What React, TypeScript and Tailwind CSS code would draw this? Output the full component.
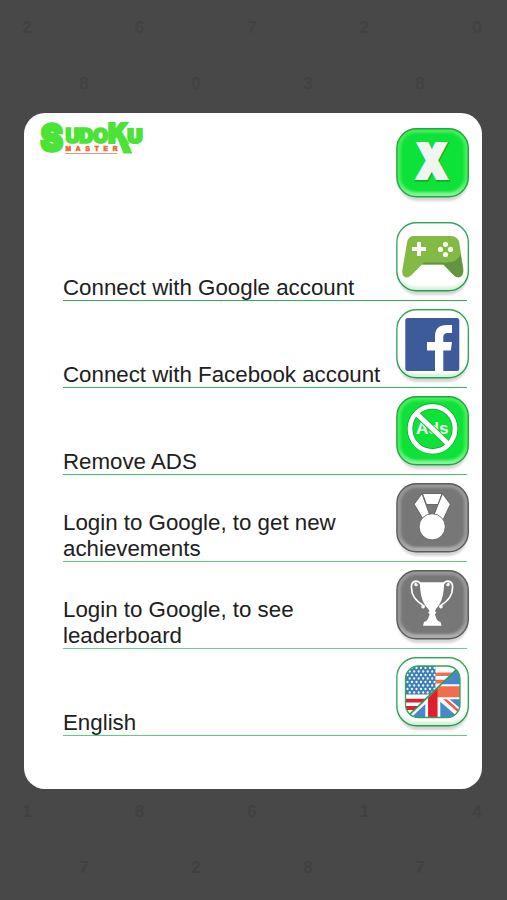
import type { ReactNode } from "react";

type Tone = "green" | "white" | "gray";

const tones = {
  green: { edge: "#23a545", rim: "#43ee58", face: "#08e237", glow: "#8bf59a" },
  white: { edge: "#23a24b", rim: "#ffffff", face: "#ffffff", glow: "#ffffff" },
  gray: { edge: "#5c5c5c", rim: "#969696", face: "#777777", glow: "#b0b0b0" },
};

function Tile({ tone, label, children }: { tone: Tone; label: string; children: ReactNode }) {
  const t = tones[tone];
  return (
    <button aria-label={label} className="block h-[76px] w-[74px] shrink-0">
      <svg viewBox="0 0 74 76" className="block h-[76px] w-[74px]">
        <defs>
          <linearGradient id={"face-" + label} x1="0" y1="0" x2="0" y2="1">
            <stop offset="0" stopColor={t.rim} />
            <stop offset="0.75" stopColor={t.rim} />
            <stop offset="1" stopColor={tone === "white" ? "#d3eed9" : t.glow} />
          </linearGradient>
          <filter id={"soft-" + label} x="-10%" y="-10%" width="120%" height="120%">
            <feGaussianBlur stdDeviation="1.3" />
          </filter>
        </defs>
        <rect x="2" y="5" width="70" height="68" rx="20" fill="#000" opacity="0.16" filter={"url(#soft-" + label + ")"} />
        <rect x="0.9" y="0.8" width="71.4" height="68" rx="19.5" fill={"url(#face-" + label + ")"} stroke={t.edge} strokeWidth="1.4" />
        {tone === "white" ? (
          <rect x="2.6" y="2.5" width="68" height="62" rx="18" fill="#fff" filter={"url(#soft-" + label + ")"} />
        ) : (
          <rect x="5" y="5" width="63" height="59" rx="15" fill={t.face} filter={"url(#soft-" + label + ")"} />
        )}
        {children}
      </svg>
    </button>
  );
}

function CloseGlyph() {
  return (
    <g fontFamily="Inter" fontWeight="900" fontSize="47">
      <text x="21.4" y="51.4" textLength="30" lengthAdjust="spacingAndGlyphs" fill="#14a832" stroke="#14a832" strokeWidth="5">X</text>
      <text x="20.7" y="50" textLength="30" lengthAdjust="spacingAndGlyphs" fill="#f1f5f1" stroke="#f1f5f1" strokeWidth="4">X</text>
    </g>
  );
}

function Gamepad() {
  return (
    <g>
      <path d="M17 14H55Q61.5 14 63.2 20.5L67.3 46.5Q68.2 53 64 55Q60.5 56.5 57 52.5L47 42.5H26L15 53.5Q11 57 8 54.5Q5.5 52.5 6.5 47.5L11 20.5Q12.5 14 17 14Z" fill="#83ba45" />
      <path d="M26 42.5H48L57 52.5Q61 56.5 64.5 54.5Q67.5 52.5 67 46.5L64.5 32.5Q61 40.5 50 40.5H28Z" fill="#629443" />
      <path d="M23 20v14M16 27h14" stroke="#fff" strokeWidth="4" />
      <g fill="#f4fbe9">
        <circle cx="49.5" cy="22.3" r="2.6" />
        <circle cx="44.5" cy="27.4" r="2.6" />
        <circle cx="54.5" cy="27.4" r="2.6" />
        <circle cx="49.5" cy="32.5" r="2.6" />
      </g>
    </g>
  );
}

function FacebookMark() {
  return (
    <g>
      <rect x="9.3" y="8.9" width="54" height="53" rx="2.5" fill="#3d5a9b" />
      <path d="M39 61.9V41.5H31V33H39V27.5C39 19.5 43.3 16 50.5 16H56V24H52C48.6 24 47.3 25.5 47.3 28.8V33H56L54.8 41.5H47.3V61.9Z" fill="#fff" />
    </g>
  );
}

function NoAds() {
  return (
    <g>
      <circle cx="36.5" cy="32.8" r="22.5" fill="none" stroke="#149c31" strokeWidth="6" />
      <text x="20" y="38.4" fontFamily="Liberation Sans" fontWeight="700" fontSize="17" textLength="32.5" lengthAdjust="spacingAndGlyphs" fill="#effff1">Ads</text>
      <path d="M20 17L53 48.8" stroke="#20bc3c" strokeWidth="6.6" />
      <path d="M20 17L53 48.8" stroke="#fff" strokeWidth="4.8" />
      <circle cx="36.5" cy="32.8" r="22.5" fill="none" stroke="#fff" strokeWidth="4.8" />
    </g>
  );
}

function Medal() {
  return (
    <g fill="#fff" stroke="#555" strokeWidth="0.8">
      <path d="M26.5 10.5H46L42 21.5H30.5Z" />
      <path d="M26 10.7L18.2 21.2L28.3 38L33.3 31Z" />
      <path d="M46.5 10.7L54.3 21.2L46.5 38L38.3 31Z" />
      <circle cx="36.2" cy="43.8" r="13.1" />
    </g>
  );
}

function Trophy() {
  return (
    <g transform="translate(0 -0.8)">
      <g fill="none" stroke="#fff" strokeWidth="1.7" strokeLinecap="round">
        <path d="M24.2 14.5C22 10.5 15.3 11.2 15.4 18C15.5 26 19 31 27.5 36.5M20 14.2a1 1 0 1 0 1 1.4M27.5 36.5a1 1 0 1 1-1.4 1" />
        <path d="M47.8 14.5C50 10.5 56.7 11.2 56.6 18C56.5 26 53 31 44.5 36.5M52 14.2a1 1 0 1 1-1 1.4M44.5 36.5a1 1 0 1 0 1.4 1" />
      </g>
      <path d="M23.7 13H48.3Q47.7 29 43 36Q39.5 39.5 39 42L40.4 43.2L38.8 45.2L39.8 47.5Q40.3 51.5 44.5 52.7L45.5 56.5H27L28 52.7Q32.2 51.5 32.7 47.5L33.7 45.2L32.1 43.2L33.5 42Q32.5 39.5 29 36Q24.3 29 23.7 13Z" fill="#fff" />
    </g>
  );
}

const stars = Array.from({ length: 8 }, (_, r) =>
  Array.from({ length: 7 }, (_, c) => ({ x: 11.5 + c * 4.5 + (r % 2) * 2.2, y: 11 + r * 3.5 }))
).flat();

function Flags() {
  return (
    <g>
      <clipPath id="flag-frame"><rect x="9.5" y="9" width="54.5" height="51.5" rx="13" /></clipPath>
      <clipPath id="flag-us"><path d="M9 8H64L10 62Z" /></clipPath>
      <clipPath id="flag-uk"><path d="M65 8V62H11Z" /></clipPath>
      <g clipPath="url(#flag-frame)">
        <g clipPath="url(#flag-us)">
          <rect x="8" y="8" width="58" height="54" fill="#fff" />
          <path d="M39 17.3H66M39 24.6H66" stroke="#ef7050" strokeWidth="3.6" />
          <path d="M8 43.7H66M8 51H66M8 58.3H66" stroke="#d92231" strokeWidth="3.8" />
          <rect x="8" y="8" width="31.5" height="29.5" fill="#3d7fb3" />
          {stars.map((s, i) => <circle key={i} cx={s.x} cy={s.y} r="1.15" fill="#f2f9ff" />)}
        </g>
        <g clipPath="url(#flag-uk)">
          <rect x="8" y="8" width="58" height="54" fill="#4688cb" />
          <path d="M38 34L68 60M37 34L8 62" stroke="#fff" strokeWidth="8" />
          <path d="M42 36L68 59" stroke="#ed5c4f" strokeWidth="2.6" />
          <path d="M31 40L8 61" stroke="#df2b38" strokeWidth="2.6" />
          <path d="M36.8 20V62M8 34.7H66" stroke="#fff" strokeWidth="15" />
          <path d="M8 34.7H66" stroke="#f36c4d" strokeWidth="11" />
          <path d="M36.8 30V62" stroke="#df1f2d" strokeWidth="9.5" />
        </g>
      </g>
      <path d="M13.5 57.5L60.5 12.5" stroke="#28994b" strokeWidth="1.6" />
      <rect x="9.5" y="9" width="54.5" height="51.5" rx="13" fill="none" stroke="#35a456" strokeWidth="1.3" />
    </g>
  );
}

function Logo() {
  return (
    <svg viewBox="0 -8 110 56" className="block h-[56px] w-[110px]" aria-label="Sudoku Master">
      <g fontFamily="Inter, Roboto" fontWeight="900" fill="#4be336" stroke="#4be336" strokeLinejoin="miter">
        <text x="2.8" y="30.2" fontSize="36.5" strokeWidth="3.4" textLength="22" lengthAdjust="spacingAndGlyphs">S</text>
        <text x="27.5" y="22.2" fontSize="19.5" strokeWidth="1.7" textLength="42.5" lengthAdjust="spacing">UDO</text>
        <text x="89.5" y="21.6" fontSize="19" strokeWidth="2.2" textLength="15" lengthAdjust="spacingAndGlyphs">U</text>
        <text x="70" y="22.4" fontSize="27" strokeWidth="2.2" textLength="20" lengthAdjust="spacingAndGlyphs">K</text>
        <path d="M79 16L85.5 32.5H94.5L88 18Z" stroke="none" />
      </g>
      <text x="27.5" y="30.4" fontFamily="Liberation Sans" fontWeight="700" fontSize="6.5" textLength="52" fill="#ee6a38" stroke="#ee6a38" strokeWidth="0.7">MASTER</text>
      <path d="M27 32.5H79" stroke="#e2987c" strokeWidth="1" />
    </svg>
  );
}

const rows: { text: string; label: string; tone: Tone; icon: ReactNode; line: string }[] = [
  { text: "Connect with Google account", label: "google", tone: "white", icon: <Gamepad />, line: "border-[#2fb353]" },
  { text: "Connect with Facebook account", label: "facebook", tone: "white", icon: <FacebookMark />, line: "border-[#2fbb55]" },
  { text: "Remove ADS", label: "ads", tone: "green", icon: <NoAds />, line: "border-[#40c265]" },
  { text: "Login to Google, to get new achievements", label: "achievements", tone: "gray", icon: <Medal />, line: "border-[#58cf7c]" },
  { text: "Login to Google, to see leaderboard", label: "leaderboard", tone: "gray", icon: <Trophy />, line: "border-[#6bd18a]" },
  { text: "English", label: "language", tone: "white", icon: <Flags />, line: "border-[#58cf7c]" },
];

function Digits({ wide, digits }: { wide?: boolean; digits: string }) {
  return (
    <div className={"flex h-14 items-center justify-between " + (wide ? "pr-[23px] pl-5" : "pr-[80px] pl-[77px]")}>
      {digits.split("").map((d, i) => <span key={i} className="w-3.5 text-center">{d}</span>)}
    </div>
  );
}

export default function App() {
  return (
    <div className="flex h-[900px] w-[507px] flex-col overflow-hidden bg-[#484848] font-['Liberation_Sans',Arial,sans-serif]">
      <div className="h-[113px] shrink-0 text-[17px] font-bold text-[#424242]">
        <Digits wide digits="26720" />
        <Digits digits="8038" />
      </div>
      <main className="ml-6 h-[676px] w-[458px] shrink-0 rounded-[21px] bg-white pr-3 pl-[39px]">
        <header className="flex h-[101px] items-start justify-between">
          <div className="-ml-[25px]"><Logo /></div>
          <div className="pt-[15px]"><Tile tone="green" label="close"><CloseGlyph /></Tile></div>
        </header>
        {rows.map((r) => (
          <div key={r.label} className={"mr-[3px] flex h-[87px] items-end justify-between border-b " + r.line}>
            <p className="-mr-6 -mb-px w-[330px] text-[22.3px] leading-[26px] text-[#202020]">{r.text}</p>
            <div className="-mr-[3px] mb-[2px]"><Tile tone={r.tone} label={r.label}>{r.icon}</Tile></div>
          </div>
        ))}
      </main>
      <div className="-mt-[5px] shrink-0 text-[17px] font-bold text-[#414141]">
        <Digits wide digits="18614" />
        <Digits digits="7287" />
      </div>
    </div>
  );
}
